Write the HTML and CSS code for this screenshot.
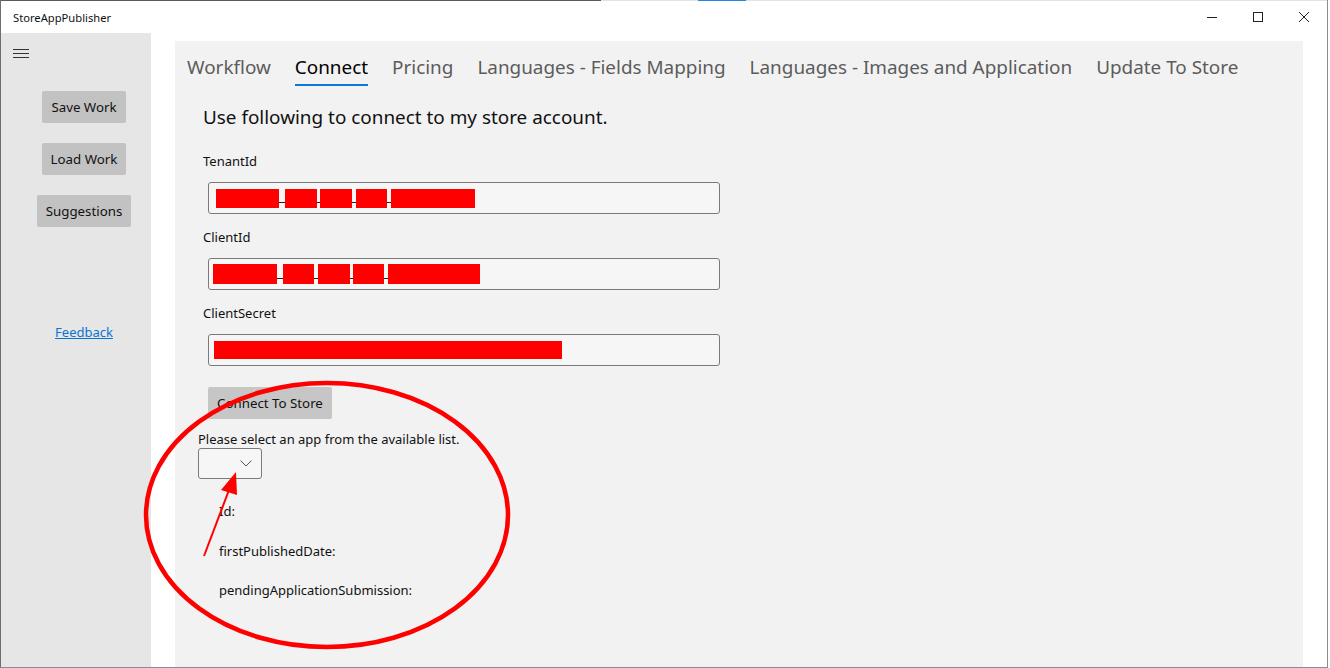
FILE: index.html
```html
<!DOCTYPE html>
<html>
<head>
<meta charset="utf-8">
<title>StoreAppPublisher</title>
<link rel="stylesheet" href="styles.css">
</head>
<body>
<div class="window">
  <div class="topline"></div>
  <div class="titlebar">
    <span class="title">StoreAppPublisher</span>
    <div class="controls">
      <span class="ctl"><svg width="12" height="12" viewBox="0 0 12 12"><path d="M1 6.5h10" stroke="#222" stroke-width="1"/></svg></span>
      <span class="ctl"><svg width="12" height="12" viewBox="0 0 12 12"><rect x="1.5" y="1.5" width="9" height="9" fill="none" stroke="#222" stroke-width="1"/></svg></span>
      <span class="ctl"><svg width="12" height="12" viewBox="0 0 12 12"><path d="M1 1L11 11M11 1L1 11" stroke="#222" stroke-width="1"/></svg></span>
    </div>
  </div>
  <div class="main">
    <aside class="sidebar">
      <div class="hamburger"><span></span><span></span><span></span></div>
      <div class="side-actions">
        <button class="btn">Save Work</button>
        <button class="btn">Load Work</button>
        <button class="btn">Suggestions</button>
        <a class="feedback" href="#">Feedback</a>
      </div>
    </aside>
    <div class="spacer"></div>
    <section class="panel">
      <nav class="tabs">
        <span class="tab">Workflow</span>
        <span class="tab active">Connect</span>
        <span class="tab">Pricing</span>
        <span class="tab">Languages - Fields Mapping</span>
        <span class="tab">Languages - Images and Application</span>
        <span class="tab">Update To Store</span>
      </nav>
      <div class="form">
        <h1 class="heading">Use following to connect to my store account.</h1>
        <label class="label first">TenantId</label>
        <div class="input">
          <span class="red" style="width:63px"></span><span class="dash" style="width:6px"></span>
          <span class="red" style="width:32px"></span><span class="dash" style="width:3px"></span>
          <span class="red" style="width:32px"></span><span class="dash" style="width:4px"></span>
          <span class="red" style="width:31px"></span><span class="dash" style="width:4px"></span>
          <span class="red" style="width:84px"></span>
        </div>
        <label class="label">ClientId</label>
        <div class="input shift">
          <span class="red tall" style="width:64px"></span><span class="dash" style="width:6px"></span>
          <span class="red tall" style="width:31px"></span><span class="dash" style="width:4px"></span>
          <span class="red tall" style="width:32px"></span><span class="dash" style="width:3px"></span>
          <span class="red tall" style="width:31px"></span><span class="dash" style="width:4px"></span>
          <span class="red tall" style="width:92px"></span>
        </div>
        <label class="label">ClientSecret</label>
        <div class="input secret">
          <span class="red short" style="width:348px"></span>
        </div>
        <button class="btn connect">Connect To Store</button>
        <div class="select-text">Please select an app from the available list.</div>
        <div class="dropdown">
          <svg width="12" height="7" viewBox="0 0 12 7"><path d="M0.5 0.5L6 6L11.5 0.5" fill="none" stroke="#555" stroke-width="1"/></svg>
        </div>
        <div class="info first">Id:</div>
        <div class="info">firstPublishedDate:</div>
        <div class="info last">pendingApplicationSubmission:</div>
      </div>
    </section>
    <div class="rightgap"></div>
  </div>
</div>
<svg class="annot" width="1330" height="668" viewBox="0 0 1330 668">
  <ellipse cx="327" cy="515" rx="181" ry="132" fill="none" stroke="#ff0000" stroke-width="4.5"/>
  <line x1="204" y1="556" x2="229" y2="490" stroke="#ff0000" stroke-width="2"/>
  <polygon points="236,472 221,490 237,495" fill="#ff0000"/>
</svg>
</body>
</html>
```
FILE: styles.css
```css
* { box-sizing: border-box; }
html, body {
  margin: 0;
  padding: 0;
  width: 1330px;
  height: 668px;
  overflow: hidden;
  background: #ffffff;
  font-family: "Noto Sans", "Open Sans", sans-serif;
  color: #000;
}
.window {
  width: 1328px;
  height: 668px;
  border-left: 1px solid #6e6e6e;
  border-right: 1px solid #8c8c8c;
  border-bottom: 1px solid #8c8c8c;
  display: flex;
  flex-direction: column;
  background: #fff;
}
.topline {
  height: 1px;
  flex: none;
  background: linear-gradient(to right, #5a5a5a 0, #5a5a5a 600px, #e3e3e3 600px, #e3e3e3 697px, #1e88e5 697px, #1e88e5 745px, #e3e3e3 745px);
}
.titlebar {
  height: 32px;
  flex: none;
  display: flex;
  align-items: center;
  padding-left: 12px;
}
.title {
  font-size: 11.2px;
  color: #111;
}
.controls {
  margin-left: auto;
  display: flex;
  height: 32px;
}
.ctl {
  width: 46px;
  height: 32px;
  display: flex;
  align-items: center;
  justify-content: center;
}
.main {
  flex: 1;
  display: flex;
  min-height: 0;
}
.sidebar {
  width: 150px;
  flex: none;
  background: #e6e6e6;
  display: flex;
  flex-direction: column;
}
.hamburger {
  margin: 16px 0 0 12px;
  width: 16px;
  display: flex;
  flex-direction: column;
  gap: 3px;
}
.hamburger span {
  display: block;
  height: 1px;
  background: #333;
}
.side-actions {
  margin-top: 33px;
  padding-left: 16px;
  display: flex;
  flex-direction: column;
  align-items: center;
  gap: 20px;
}
.btn {
  font-family: inherit;
  font-size: 13.3px;
  color: #111;
  background: #c2c2c2;
  border: none;
  border-radius: 2px;
  height: 32px;
  padding: 0 9px;
  line-height: 32px;
}
.feedback {
  margin-top: 75px;
  font-size: 13px;
  line-height: 20px;
  color: #0a74d1;
  text-decoration: underline;
}
.spacer {
  width: 24px;
  flex: none;
}
.panel {
  width: 1128px;
  flex: none;
  margin-top: 8px;
  background: #f2f2f2;
  padding: 12px 0 0 12px;
}
.rightgap {
  flex: 1;
}
.tabs {
  display: flex;
  gap: 24px;
}
.tab {
  font-size: 18.9px;
  line-height: 28px;
  color: #5c5c5c;
  padding-bottom: 3px;
  border-bottom: 2px solid transparent;
}
.tab.active {
  color: #000;
  border-bottom-color: #0a78d4;
}
.form {
  margin-left: 16px;
  display: flex;
  flex-direction: column;
  align-items: flex-start;
}
.heading {
  margin: 17px 0 0 0;
  font-size: 18.9px;
  line-height: 28px;
  font-weight: normal;
  color: #111;
}
.label {
  font-size: 13px;
  line-height: 20px;
  margin-top: 13px;
  color: #111;
}
.label.first {
  margin-top: 20px;
}
.input {
  margin-top: 11px;
  margin-left: 5px;
  width: 512px;
  height: 32px;
  border: 1px solid #7a7a7a;
  border-radius: 3px;
  background: #f6f6f6;
  display: flex;
  align-items: center;
  padding-left: 7px;
}
.input.shift { padding-left: 4px; }
.input.secret { padding-left: 5px; }
.red {
  display: block;
  height: 19px;
  background: #ff0000;
}
.red.tall { height: 20px; }
.red.short { height: 18px; }
.dash {
  display: block;
  height: 1px;
  background: #222;
  margin-top: 8px;
}
.btn.connect {
  margin-top: 21px;
  margin-left: 5px;
  background: #c6c6c6;
}
.select-text {
  margin-top: 11px;
  margin-left: -5px;
  font-size: 13px;
  line-height: 18px;
  color: #111;
}
.dropdown {
  margin-left: -5px;
  width: 64px;
  height: 31px;
  border: 1px solid #7a7a7a;
  border-radius: 3px;
  background: #f6f6f6;
  display: flex;
  align-items: center;
  justify-content: flex-end;
  padding-right: 9px;
}
.info {
  margin-left: 16px;
  margin-top: 20px;
  font-size: 13px;
  line-height: 20px;
  color: #111;
}
.info.first { margin-top: 22px; }
.info.last { margin-top: 19px; }
.annot {
  position: absolute;
  left: 0;
  top: 0;
  pointer-events: none;
}
```
